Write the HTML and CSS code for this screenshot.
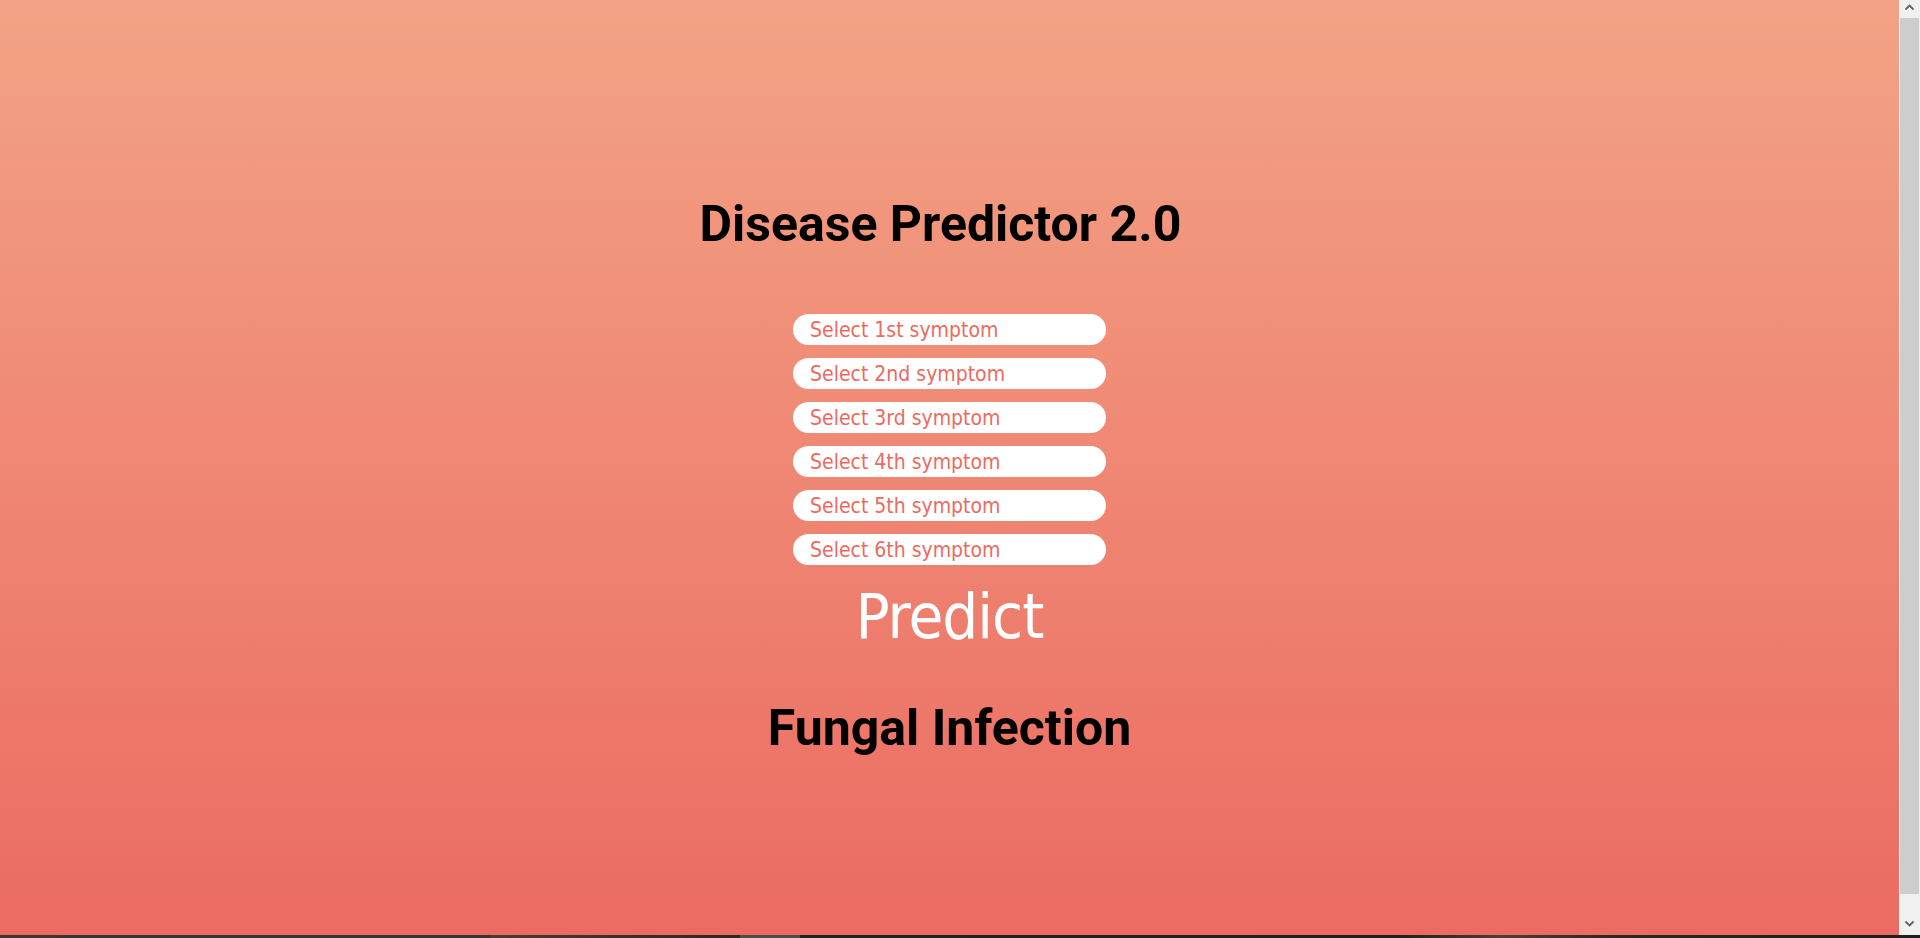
FILE: index.html
```html
<!DOCTYPE html>
<html lang="en">
<head>
<meta charset="utf-8">
<title>Disease Predictor 2.0</title>
<link rel="stylesheet" href="styles.css">
</head>
<body>
<div class="window">
  <div class="viewport">
    <main class="page">
      <h1 class="title">Disease Predictor 2.0</h1>
      <div class="symptoms">
        <div class="pill">Select 1st symptom</div>
        <div class="pill">Select 2nd symptom</div>
        <div class="pill">Select 3rd symptom</div>
        <div class="pill">Select 4th symptom</div>
        <div class="pill">Select 5th symptom</div>
        <div class="pill">Select 6th symptom</div>
      </div>
      <div class="predict">Predict</div>
      <h2 class="result">Fungal Infection</h2>
    </main>
    <div class="scrollbar">
      <div class="sb-btn sb-up">
        <svg width="21" height="17" viewBox="0 0 21 17"><path d="M6.5 9.5 L10.5 5.5 L14.5 9.5" fill="none" stroke="#606060" stroke-width="1.8"/></svg>
      </div>
      <div class="sb-track"><div class="sb-thumb"></div></div>
      <div class="sb-btn sb-down">
        <svg width="21" height="17" viewBox="0 0 21 17"><path d="M6.5 3.5 L10.5 7.5 L14.5 3.5" fill="none" stroke="#606060" stroke-width="1.8"/></svg>
      </div>
    </div>
  </div>
  <div class="taskbar"></div>
</div>
</body>
</html>
```
FILE: styles.css
```css
html, body {
  margin: 0;
  padding: 0;
  height: 100%;
  overflow: hidden;
}

.window {
  display: flex;
  flex-direction: column;
  height: 938px;
}

.viewport {
  display: flex;
  height: 935px;
}

.page {
  flex: 1;
  display: flex;
  flex-direction: column;
  align-items: center;
  padding-top: 194px;
  background: linear-gradient(to bottom, #f3a385 0%, #eb6b62 100%);
}

.title {
  margin: 0;
  padding-right: 18px;
  font-family: Roboto, "Liberation Sans", sans-serif;
  font-weight: 700;
  font-size: 50px;
  line-height: 60px;
  color: #000;
}

.symptoms {
  margin-top: 60px;
  display: flex;
  flex-direction: column;
  gap: 13px;
}

.pill {
  box-sizing: border-box;
  width: 313px;
  height: 31px;
  padding: 1px 0 0 17px;
  border-radius: 16px;
  background: #fff;
  color: #ec6a60;
  font-family: "DejaVu Sans Condensed", "DejaVu Sans", sans-serif;
  font-stretch: condensed;
  font-size: 21px;
  line-height: 31px;
  white-space: nowrap;
  overflow: hidden;
}

.predict {
  margin-top: 14px;
  color: #fff;
  font-family: "DejaVu Sans Condensed", "DejaVu Sans", sans-serif;
  font-stretch: condensed;
  font-size: 63px;
  line-height: 76px;
  letter-spacing: -1px;
}

.result {
  margin: 43px 0 0 0;
  font-family: Roboto, "Liberation Sans", sans-serif;
  font-weight: 700;
  font-size: 50px;
  line-height: 60px;
  color: #000;
}

.scrollbar {
  width: 21px;
  display: flex;
  flex-direction: column;
  background: #f0f0f0;
  border-left: 1px solid #f7f7f7;
  box-sizing: border-box;
}

.sb-btn {
  height: 17px;
  flex: none;
  display: flex;
}

.sb-btn svg {
  display: block;
  margin-left: -1px;
}

.sb-track {
  flex: 1;
  display: flex;
  flex-direction: column;
}

.sb-thumb {
  margin: 1px 1px 0 0;
  height: 876px;
  background: #cdcdcd;
}

.taskbar {
  height: 3px;
  background: linear-gradient(to right,
    #3b3631 0, #3b3631 60px,
    #343434 60px, #343434 490px,
    #463c33 490px, #2c2825 740px,
    #4d4d4d 740px, #4d4d4d 800px,
    #222222 800px, #1f1f1f 1400px,
    #4a4036 1500px, #2a2724 1620px,
    #1e1e1e 1900px, #1e1e1e 1920px);
}
```
